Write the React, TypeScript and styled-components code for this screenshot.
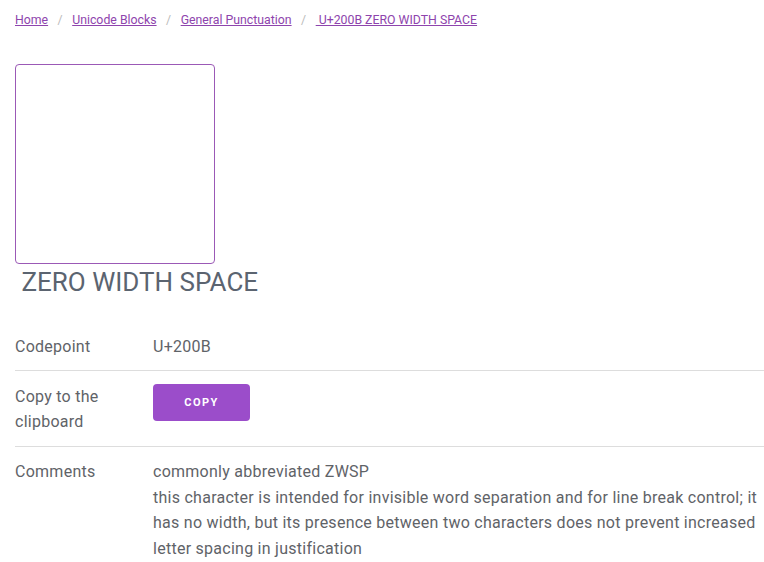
import React from "react";
import styled, { createGlobalStyle } from "styled-components";

const Global = createGlobalStyle`
  html, body { margin: 0; padding: 0; background: #fff; }
  body { font-family: Roboto, "Noto Sans", sans-serif; color: #5f6368; }
`;

const Page = styled.div`
  padding: 11px 0 0 15px;
`;

const Crumbs = styled.nav`
  display: flex;
  align-items: center;
  font-size: 12.3px;
  line-height: 18px;
`;

const Crumb = styled.a`
  color: #8e44ad;
  text-decoration: underline;
`;

const Sep = styled.span`
  color: #bbb;
  padding: 0 9.5px;
`;

const Glyph = styled.div`
  margin-top: 35px;
  width: 198px;
  height: 198px;
  border: 1px solid #9b59b6;
  border-radius: 4px;
`;

const Title = styled.h1`
  margin: 0;
  font-size: 26px;
  font-weight: 400;
  line-height: 37px;
  color: #5b6470;
`;

const Table = styled.div`
  margin-top: 20px;
  display: grid;
  grid-template-columns: 138px 1fr;
  font-size: 16px;
  line-height: 25.6px;
  letter-spacing: 0.26px;
`;

const Cell = styled.div<{ $last?: boolean }>`
  padding: 12.5px 0 11px;
  border-bottom: ${(p) => (p.$last ? "none" : "1px solid #ddd")};
`;

const Label = styled(Cell)`
  padding-right: 12px;
`;

const CopyButton = styled.button`
  background: #9b4dca;
  color: #fff;
  border: none;
  border-radius: 4px;
  width: 97px;
  height: 37px;
  font-family: Roboto, sans-serif;
  font-weight: 700;
  font-size: 11px;
  letter-spacing: 1.4px;
  cursor: pointer;
`;

export default function App() {
  return (
    <>
      <Global />
      <Page>
        <Crumbs>
          <Crumb href="#">Home</Crumb>
          <Sep>/</Sep>
          <Crumb href="#">Unicode Blocks</Crumb>
          <Sep>/</Sep>
          <Crumb href="#">General Punctuation</Crumb>
          <Sep>/</Sep>
          <Crumb href="#">{"\u200B U+200B ZERO WIDTH SPACE"}</Crumb>
        </Crumbs>
        <Glyph />
        <Title>{"\u200B ZERO WIDTH SPACE"}</Title>
        <Table>
          <Label>Codepoint</Label>
          <Cell>U+200B</Cell>
          <Label>Copy to the clipboard</Label>
          <Cell>
            <CopyButton>COPY</CopyButton>
          </Cell>
          <Label $last>Comments</Label>
          <Cell $last>
            commonly abbreviated ZWSP
            <br />
            this character is intended for invisible word separation and for line break control; it has no width, but its presence between two characters does not prevent increased letter spacing in justification
          </Cell>
        </Table>
      </Page>
    </>
  );
}
